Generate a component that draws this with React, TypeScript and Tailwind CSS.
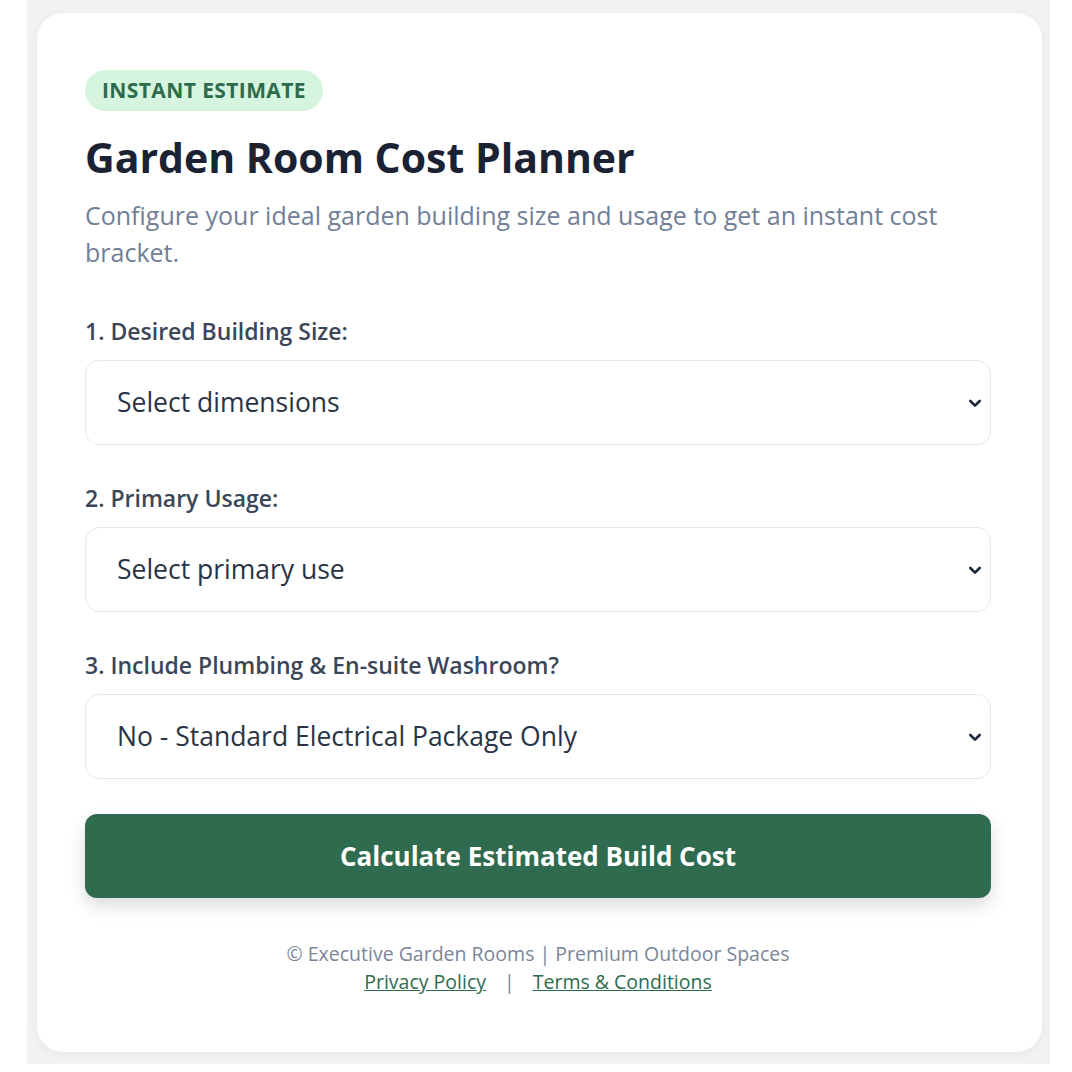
import React from 'react';

const FONT = { fontFamily: '"Open Sans", "Noto Sans", sans-serif' };

function Chevron() {
  return (
    <svg
      className="pointer-events-none absolute right-[8px] top-1/2 -translate-y-1/2"
      width="16"
      height="16"
      viewBox="0 0 24 24"
      fill="none"
      stroke="#1e2a3b"
      strokeWidth="4"
      strokeLinecap="round"
      strokeLinejoin="round"
    >
      <path d="M5 9l7 7 7-7" />
    </svg>
  );
}

function Field({ label, options }: { label: string; options: string[] }) {
  return (
    <div className="flex flex-col">
      <label className="mb-[14px] text-[23px] font-semibold leading-[30px] text-[#3b4658]">{label}</label>
      <div className="relative">
        <select
          defaultValue={options[0]}
          className="h-[85px] w-full appearance-none rounded-[14px] border border-[#e4e9f0] bg-white pl-[31px] pr-10 text-[26.5px] text-[#2a3445] outline-none"
          style={FONT}
        >
          {options.map((o) => (
            <option key={o}>{o}</option>
          ))}
        </select>
        <Chevron />
      </div>
    </div>
  );
}

export default function App() {
  return (
    <div className="min-h-[1072px] bg-white" style={FONT}>
      <div className="ml-[27px] w-[1023px] bg-[#f0f2f3] pl-[10px] pr-[8px] pt-[13px] pb-[12px]">
        <div className="rounded-[26px] bg-white pl-[48px] pr-[51px] pt-[57px] pb-[56px] shadow-[0_2px_10px_rgba(0,0,0,0.05)]">
          <span className="inline-flex h-[41px] items-center rounded-full bg-[#d5f5de] px-[17px] text-[21px] font-bold tracking-[0.4px] text-[#2e6a4e]">
            INSTANT ESTIMATE
          </span>

          <h1 className="mt-[20px] text-[41px] font-bold leading-[52px] text-[#1a2233]">Garden Room Cost Planner</h1>

          <p className="mt-[14px] text-[25px] leading-[37px] text-[#718096]">
            Configure your ideal garden building size and usage to get an instant cost bracket.
          </p>

          <div className="mt-[45px] flex flex-col gap-[38px]">
            <Field
              label="1. Desired Building Size:"
              options={['Select dimensions', 'Small (up to 3m x 3m)', 'Medium (up to 4m x 5m)', 'Large (5m x 6m and above)']}
            />
            <Field
              label="2. Primary Usage:"
              options={['Select primary use', 'Home Office', 'Gym / Fitness Studio', 'Guest Annex']}
            />
            <Field
              label="3. Include Plumbing & En-suite Washroom?"
              options={['No - Standard Electrical Package Only', 'Yes - Add Plumbing & Washroom']}
            />
          </div>

          <button
            className="mt-[35px] h-[84px] w-full rounded-[12px] bg-[#2f6b4f] text-[26px] font-bold text-white shadow-[0_8px_18px_rgba(0,0,0,0.14)]"
            style={FONT}
          >
            Calculate Estimated Build Cost
          </button>

          <div className="mt-[42px] text-center text-[19.5px] leading-[28px] text-[#7a8699]">
            <div>© Executive Garden Rooms | Premium Outdoor Spaces</div>
            <div>
              <a href="#" className="text-[#2f6b4f] underline">Privacy Policy</a>
              <span className="mx-[18px]">|</span>
              <a href="#" className="text-[#2f6b4f] underline">Terms &amp; Conditions</a>
            </div>
          </div>
        </div>
      </div>
    </div>
  );
}
